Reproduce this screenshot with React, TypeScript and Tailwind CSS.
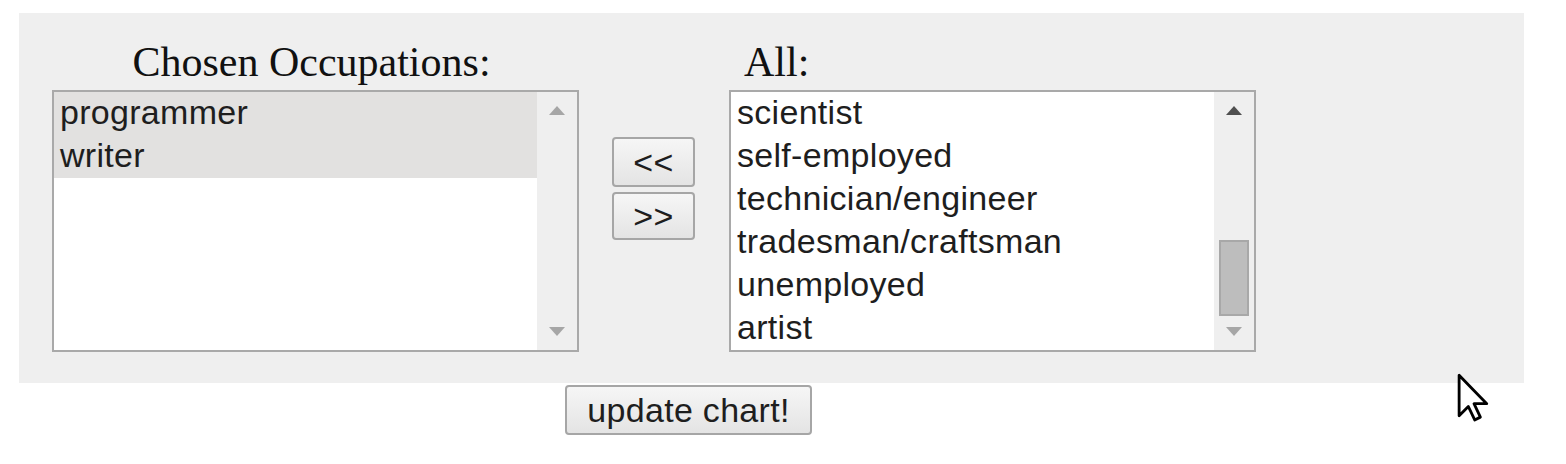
import type { ReactNode } from "react";

const chosen = ["programmer", "writer"];
const all = [
  "scientist",
  "self-employed",
  "technician/engineer",
  "tradesman/craftsman",
  "unemployed",
  "artist",
];

const sans = "font-['Liberation_Sans',Arial,sans-serif] text-[34px] tracking-[0.3px] text-[#1e1e1e]";
const serif = "font-['Liberation_Serif','Times_New_Roman',serif] text-[42px] text-[#111]";

function Arrow({ up, dark }: { up?: boolean; dark?: boolean }) {
  return (
    <svg width="16" height="9" viewBox="0 0 16 9">
      <path
        d={up ? "M0 9 L8 0 L16 9 Z" : "M0 0 L16 0 L8 9 Z"}
        fill={dark ? "#4f4f4f" : "#a6a6a6"}
      />
    </svg>
  );
}

function ListBox({
  items,
  selected = 0,
  scrollable,
}: {
  items: string[];
  selected?: number;
  scrollable?: boolean;
}) {
  return (
    <div className="flex h-[262px] w-[527px] border-2 border-[#a9a9a9] bg-white">
      <div className="flex-1 overflow-hidden">
        {items.map((it, i) => (
          <div
            key={it}
            className={`h-[43px] pl-[6px] leading-[41px] whitespace-nowrap ${sans} ${
              i < selected ? "bg-[#e2e1e0]" : ""
            }`}
          >
            {it}
          </div>
        ))}
      </div>
      <div className="flex w-[40px] flex-col items-center bg-[#efefef] pt-[14px] pb-[14px]">
        <Arrow up dark={scrollable} />
        <div className="flex-1 w-full flex flex-col justify-end pb-[11px] px-[5px]">
          {scrollable && (
            <div className="h-[76px] w-full border-2 border-[#a8a8a8] bg-[#bdbdbd]" />
          )}
        </div>
        <Arrow />
      </div>
    </div>
  );
}

function Btn({ children, className = "" }: { children: ReactNode; className?: string }) {
  return (
    <button
      className={`rounded-[4px] border-2 border-[#a6a6a6] bg-gradient-to-b from-[#f6f6f6] to-[#e4e4e4] ${sans} ${className}`}
    >
      {children}
    </button>
  );
}

export default function App() {
  return (
    <div className="relative h-[464px] w-[1566px] bg-white pt-[13px] pl-[19px]">
      <div className="flex w-[1505px] items-start bg-[#efefef] pt-[25px] pb-[31px] pl-[33px]">
        <div className="flex flex-col">
          <div className={`h-[52px] pr-[8px] text-center leading-[48px] ${serif}`}>
            Chosen Occupations:
          </div>
          <ListBox items={chosen} selected={2} />
        </div>

        <div className="ml-[33px] mt-[99px] flex flex-col gap-[5px]">
          <Btn className="h-[50px] w-[83px] leading-none">&lt;&lt;</Btn>
          <Btn className="h-[48px] w-[83px] leading-none">&gt;&gt;</Btn>
        </div>

        <div className="ml-[34px] flex flex-col">
          <div className={`h-[52px] pl-[15px] leading-[48px] ${serif}`}>All:</div>
          <ListBox items={all} scrollable />
        </div>
      </div>

      <div className="ml-[546px] mt-[2px]">
        <Btn className="h-[50px] w-[247px] leading-none">update chart!</Btn>
      </div>

      <svg
        className="absolute left-[1457px] top-[373px]"
        width="34"
        height="50"
        viewBox="0 0 24 35"
      >
        <path
          d="M1.5 1.5 L1.5 30 L8 23.5 L12.5 33 L16.5 31 L12 21.5 L21 21.5 Z"
          fill="#fff"
          stroke="#000"
          strokeWidth="2"
          strokeLinejoin="round"
        />
      </svg>
    </div>
  );
}
